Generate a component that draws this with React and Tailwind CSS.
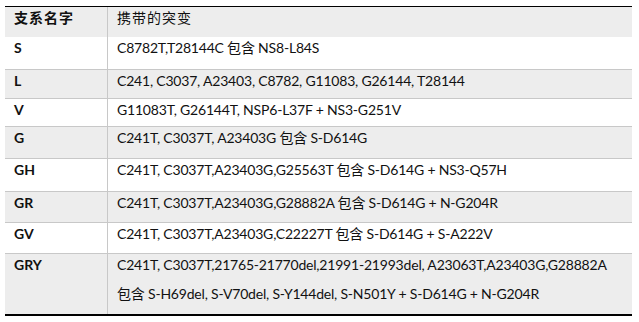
import React from "react";

const rows = [
  { name: "S", text: "C8782T,T28144C 包含 NS8-L84S", h: "h-[33px]", bg: "bg-white" },
  { name: "L", text: "C241, C3037, A23403, C8782, G11083, G26144, T28144", h: "h-[29px]", bg: "bg-[#ededed]" },
  { name: "V", text: "G11083T, G26144T, NSP6-L37F + NS3-G251V", h: "h-[28px]", bg: "bg-white" },
  { name: "G", text: "C241T, C3037T, A23403G 包含 S-D614G", h: "h-[32px]", bg: "bg-[#ededed]" },
  { name: "GH", text: "C241T, C3037T,A23403G,G25563T 包含 S-D614G + NS3-Q57H", h: "h-[33px]", bg: "bg-white" },
  { name: "GR", text: "C241T, C3037T,A23403G,G28882A 包含 S-D614G + N-G204R", h: "h-[31px]", bg: "bg-[#ededed]" },
  { name: "GV", text: "C241T, C3037T,A23403G,C22227T 包含 S-D614G + S-A222V", h: "h-[31px]", bg: "bg-white" },
];

export default function App() {
  return (
    <div
      className="w-[639px] h-[322px] bg-white pt-[6px] pl-[5px] text-[14px] text-[#111111]"
      style={{ fontFamily: "Lato, 'Noto Sans CJK SC', sans-serif" }}
    >
      <div className="w-[627px] border-t border-black border-b-2 border-b-black">
        <div className="flex h-[30px] bg-[#ededed]">
          <div className="w-[103px] shrink-0 border-r border-[#c8c8c8] pl-[9px] pt-[1px] leading-[20px] font-bold tracking-[1px]">
            支系名字
          </div>
          <div className="pl-[9px] pt-[1px] leading-[20px] tracking-[1px]">携带的突变</div>
        </div>
        {rows.map((r) => (
          <div key={r.name} className={`flex border-b border-[#c8c8c8] ${r.h} ${r.bg}`}>
            <div className="w-[103px] shrink-0 border-r border-[#c8c8c8] pl-[9px] pt-[1px] leading-[20px] font-bold">
              {r.name}
            </div>
            <div className="pl-[9px] pt-[1px] leading-[20px] whitespace-nowrap tracking-[-0.2px]">{r.text}</div>
          </div>
        ))}
        <div className="flex h-[60px] bg-[#ededed]">
          <div className="w-[103px] shrink-0 border-r border-[#c8c8c8] pl-[9px] pt-[1px] leading-[20px] font-bold">
            GRY
          </div>
          <div className="pl-[9px] pt-[1px] leading-[20px] whitespace-nowrap tracking-[-0.2px]">
            <div>C241T, C3037T,21765-21770del,21991-21993del, A23063T,A23403G,G28882A</div>
            <div className="mt-[9px]">包含 S-H69del, S-V70del, S-Y144del, S-N501Y + S-D614G + N-G204R</div>
          </div>
        </div>
      </div>
    </div>
  );
}
